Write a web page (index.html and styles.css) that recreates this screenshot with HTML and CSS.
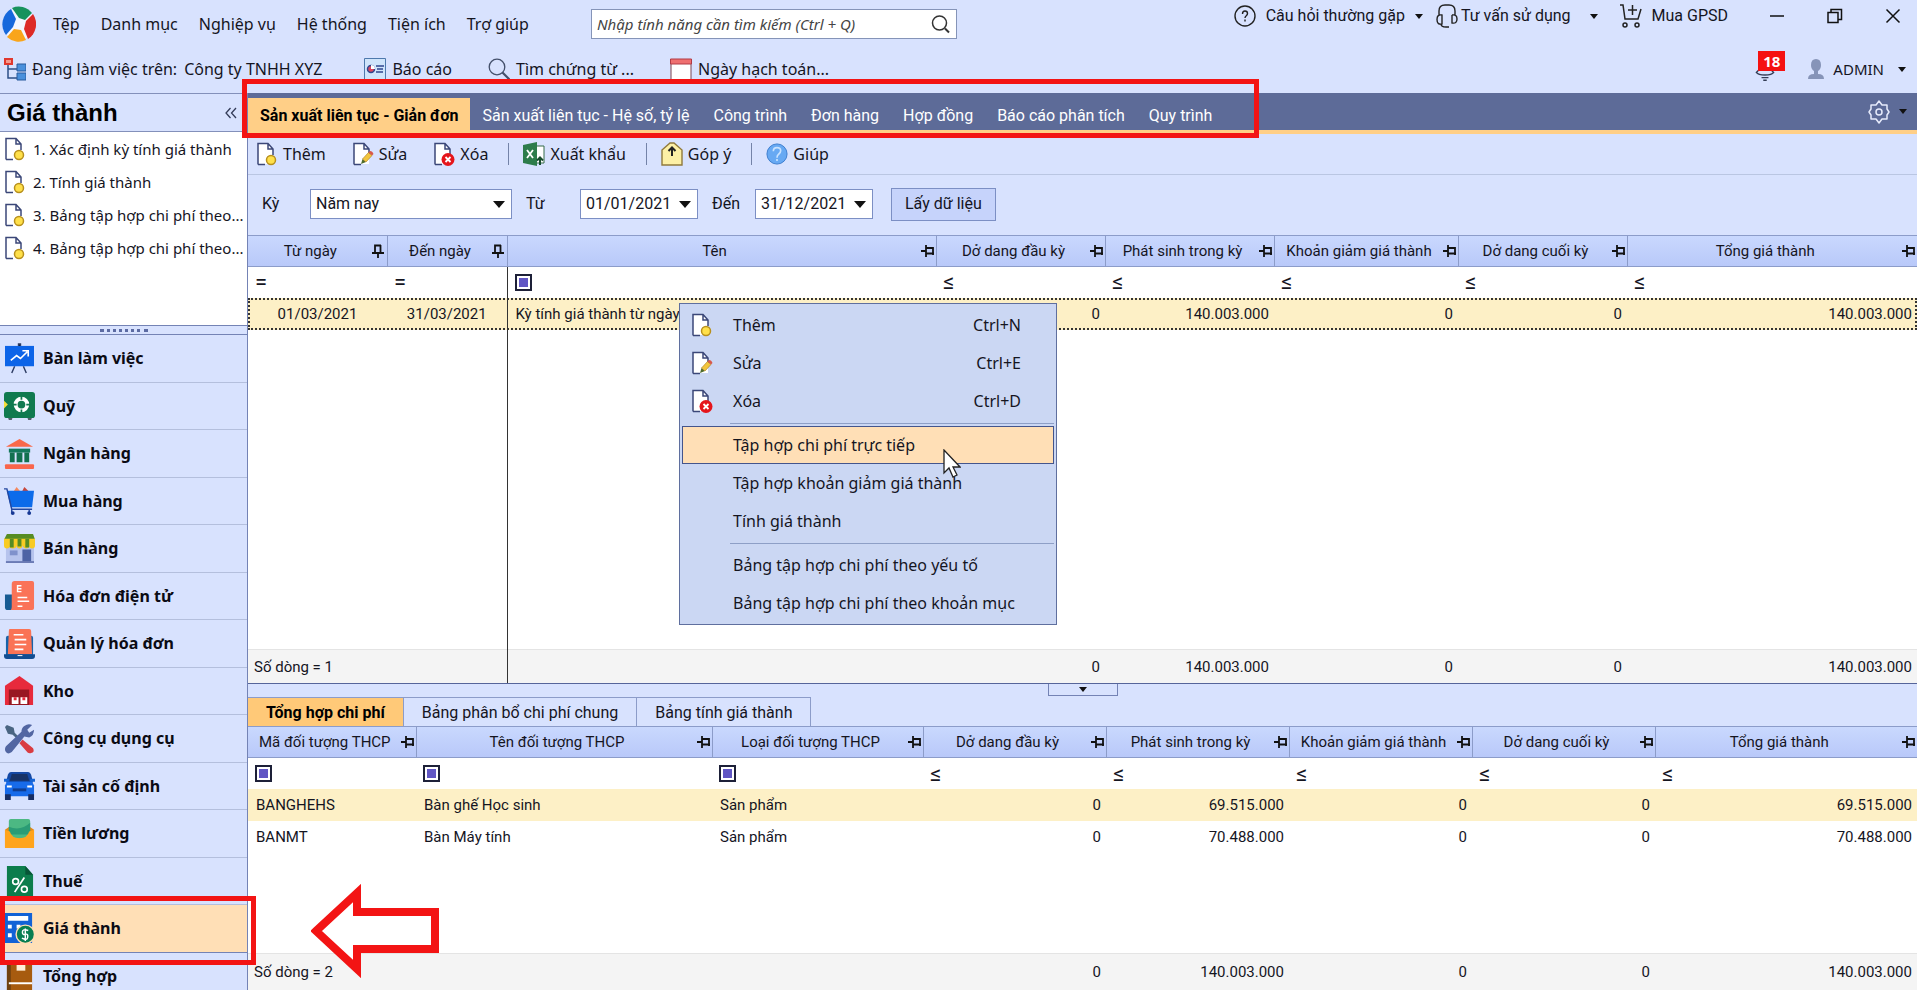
FILE: index.html
```html
<!DOCTYPE html>
<html lang="vi">
<head>
    <meta charset="UTF-8">
    <meta name="viewport" content="width=device-width, initial-scale=1.0">
    <title>Giá thành</title>
    <link rel="stylesheet" href="styles.css">
</head>
<body>
    <!-- Shared icons -->
    <svg class="sprite" aria-hidden="true">
        <symbol id="page" viewBox="0 0 22 24">
            <path d="M2 1.5h10l5 5.500v15H2z" fill="#fff"/>
            <path d="M2 22.500V1.500h10l5 5.500v6M2 22.500h7M12 1.500V7h5" fill="none" stroke="#3b4778" stroke-width="1.500"/>
        </symbol>
        <symbol id="page-new" viewBox="0 0 22 24">
            <use href="#page"/>
            <circle cx="15" cy="18" r="4.500" fill="#ffe04a" stroke="#b8901c" stroke-width="1.500"/>
        </symbol>
        <symbol id="page-edit" viewBox="0 0 22 24">
            <use href="#page"/>
            <path d="M9 22l1.500-5 3.500 3z" fill="#4d6b2e"/>
            <path d="M10.500 17l6-6.500 3.500 3-6 6.500z" fill="#f2c53d" stroke="#a67a1c" stroke-width=".6"/>
            <path d="M16.500 10.500l1.500-1.500q2.500 0 3.500 3l-1.500 1.500z" fill="#d8584a"/>
        </symbol>
        <symbol id="page-delete" viewBox="0 0 22 24">
            <use href="#page"/>
            <circle cx="15" cy="17.500" r="6.500" fill="#e5151b"/>
            <path d="M12.500 15l5 5M17.500 15l-5 5" stroke="#fff" stroke-width="1.800"/>
        </symbol>
        <symbol id="pin-side" viewBox="0 0 14 12">
            <path d="M0 6h5M5 0v12M5 3h7v6M5 8.500h8M12 2v8" fill="none" stroke="#111" stroke-width="1.800"/>
        </symbol>
        <symbol id="pin-down" viewBox="0 0 12 14">
            <path d="M6 14V9M0 9h12M3 9V1.500h6M8.500 9V1" fill="none" stroke="#111" stroke-width="1.800"/>
        </symbol>
    </svg>

    <div class="app">
        <!-- Title bar and main menu -->
        <header class="topbar">
            <div class="menu-row">
                <svg class="logo" viewBox="0 0 34 36">
                    <circle cx="17" cy="18" r="16" fill="#f3f6ff"/>
                    <path d="M10 2A17 17.500 0 0 1 30 7L23 14L17 12z" fill="#17925d"/>
                    <path d="M31 8A17 17.500 0 0 1 26 33L22 23L24 15z" fill="#dd2a26"/>
                    <path d="M24 34A17 17.500 0 0 1 5 31L12 23L19 24z" fill="#f9a51b"/>
                    <path d="M4 29A17 17.500 0 0 1 9 3L14 13L11 21z" fill="#1668dc"/>
                </svg>
                <nav class="menu">
                    <a href="#">Tệp</a>
                    <a href="#">Danh mục</a>
                    <a href="#">Nghiệp vụ</a>
                    <a href="#">Hệ thống</a>
                    <a href="#">Tiện ích</a>
                    <a href="#">Trợ giúp</a>
                </nav>
                <div class="search">
                    <input type="text" aria-label="Tìm kiếm" placeholder="Nhập tính năng cần tìm kiếm (Ctrl + Q)">
                    <svg viewBox="0 0 20 20"><circle cx="8.500" cy="9" r="7" fill="none" stroke="#333" stroke-width="1.500"/><path d="M14 14.500l4 4" stroke="#333" stroke-width="2"/></svg>
                </div>
                <div class="window-tools">
                    <button class="help-link">
                        <svg class="icon" viewBox="0 0 22 22"><circle cx="11" cy="11" r="10" fill="none" stroke="#222" stroke-width="1.400"/><path d="M8.500 9q0-3 2.500-3t2.500 2.500q0 1.200-1.200 2.200T11 13M11 14.500v2" fill="none" stroke="#222" stroke-width="1.400"/></svg>
                        <span>Câu hỏi thường gặp</span><i class="caret small"></i>
                    </button>
                    <button class="advice-link">
                        <svg class="icon tall" viewBox="0 0 22 24"><path d="M3 11V7q0-6 6-6h4q6 0 6 6v4M6 11v9q-5 1-5-4.500T6 11zM16 11v8q5 1 5-4t-5-4M5 20q0 3 5 3h3" fill="none" stroke="#222" stroke-width="1.400"/></svg>
                        <span>Tư vấn sử dụng</span><i class="caret small"></i>
                    </button>
                    <button class="buy-link">
                        <svg class="icon tall" viewBox="0 0 22 24"><path d="M0 1h3l2 14h13l3-10M8 6h9M12.500 1v10" fill="none" stroke="#222" stroke-width="1.500"/><circle cx="5" cy="21" r="2" fill="none" stroke="#222" stroke-width="1.500"/><circle cx="17" cy="21" r="2" fill="none" stroke="#222" stroke-width="1.500"/></svg>
                        <span>Mua GPSD</span>
                    </button>
                    <div class="window-buttons">
                        <button aria-label="Thu nhỏ"><svg viewBox="0 0 16 16"><path d="M1 8h14" stroke="#111" stroke-width="1.500"/></svg></button>
                        <button aria-label="Khôi phục"><svg viewBox="0 0 16 16"><path d="M1 4.500h10v10H1zM4 4.500v-3h10.500v10H11" fill="none" stroke="#111" stroke-width="1.500"/></svg></button>
                        <button aria-label="Đóng"><svg viewBox="0 0 16 16"><path d="M1.500 1.500l13 13M14.500 1.500l-13 13" stroke="#111" stroke-width="1.500"/></svg></button>
                    </div>
                </div>
            </div>

            <div class="context-row">
                <div class="company">
                    <svg class="icon tall" viewBox="0 0 22 24"><path d="M0 1h9v7H0z" fill="#e0382e"/><path d="M2 3h5v3H2z" fill="#f59a8d"/><path d="M4 8v13h9M4 12h9" fill="none" stroke="#2c4f86" stroke-width="1.500"/><path d="M13 7h9v7h-9zM13 16h9v7h-9z" fill="#4a90dc" stroke="#285b9c"/></svg>
                    <span>Đang làm việc trên:</span>
                    <span class="company-name">Công ty TNHH XYZ</span>
                </div>
                <a class="quick" href="#">
                    <svg class="icon" viewBox="0 0 22 22"><path d="M.5.500h21v21H.5z" fill="#cfe4fb" stroke="#4e79ad"/><circle cx="7" cy="11" r="3.500" fill="#d9475f" stroke="#31468f" stroke-width="1.500"/><path d="M7 11V7q4 0 4 4z" fill="#fff"/><path d="M12 8h8M13 11h6M12 14h7" stroke="#31468f" stroke-width="1.300"/></svg>
                    Báo cáo
                </a>
                <a class="quick" href="#">
                    <svg class="icon" viewBox="0 0 22 22"><circle cx="9" cy="9" r="7.800" fill="none" stroke="#44506b" stroke-width="1.300"/><path d="M14.500 14.500l7 7" stroke="#44506b" stroke-width="2.200"/></svg>
                    Tìm chứng từ ...
                </a>
                <a class="quick" href="#">
                    <svg class="icon" viewBox="0 0 22 22"><path d="M1 2h20v20H1z" fill="#fff" stroke="#7b4250"/><path d="M.5 1h21v5H.5z" fill="#ef6f70" stroke="#b23a44"/></svg>
                    Ngày hạch toán...
                </a>
                <div class="account">
                    <button class="bell" aria-label="Thông báo">
                        <svg viewBox="0 0 24 30"><path d="M2 19l4-4V8q0-6 6-6t6 6v7l4 4q-2 3-10 3T2 19zM8 25h8M10 28h4" fill="none" stroke="#333c55" stroke-width="1.600"/></svg>
                        <span class="badge">18</span>
                    </button>
                    <button class="user">
                        <svg class="icon" viewBox="0 0 18 22"><path d="M9 1q5 0 5 6 0 4-3 6v3q6 0 6 5H1q0-5 6-5v-3q-3-2-3-6 0-6 5-6z" fill="#8694b8"/></svg>
                        <span>ADMIN</span><i class="caret small"></i>
                    </button>
                </div>
            </div>
        </header>

        <!-- Sidebar -->
        <aside class="sidebar">
            <div class="sidebar-title">
                <h1>Giá thành</h1>
                <button class="collapse" aria-label="Thu gọn">
                    <svg viewBox="0 0 12 12"><path d="M5.500 1L1 6l4.500 5M11 1L6.500 6l4.500 5" fill="none" stroke="#333b58" stroke-width="1.300"/></svg>
                </button>
            </div>
            <ul class="steps">
                <li><a href="#"><svg><use href="#page-new"/></svg><span>1. Xác định kỳ tính giá thành</span></a></li>
                <li><a href="#"><svg><use href="#page-new"/></svg><span>2. Tính giá thành</span></a></li>
                <li><a href="#"><svg><use href="#page-new"/></svg><span>3. Bảng tập hợp chi phí theo...</span></a></li>
                <li><a href="#"><svg><use href="#page-new"/></svg><span>4. Bảng tập hợp chi phí theo...</span></a></li>
            </ul>
            <div class="grip"><i></i></div>
            <nav class="modules">
                <ul>
                    <li><a href="#">
                        <svg viewBox="0 0 32 32"><path d="M15 1h2v3h-2zM11 24l-3 7M20 24l3 7" stroke="#2d3c63" stroke-width="1.500"/><path d="M1 3h30v21H1z" fill="#0c64e8"/><path d="M7 18l6-5 4 3 7-7M19 8h6v6" fill="none" stroke="#fff" stroke-width="1.700"/></svg>
                        Bàn làm việc</a></li>
                    <li><a href="#">
                        <svg viewBox="0 0 32 32"><path d="M4 28h5l-1 3H5zM24 28h5l-1 3h-3z" fill="#52606a"/><rect y="2" width="32" height="27" rx="3" fill="#107a4f"/><path d="M0 11l4 4-4 4z" fill="#f5df3a"/><circle cx="18" cy="15" r="6" fill="none" stroke="#fff" stroke-width="4"/><path d="M18 6v4M18 20v4M9 15h4M23 15h4" stroke="#107a4f" stroke-width="1.800"/></svg>
                        Quỹ</a></li>
                    <li><a href="#">
                        <svg viewBox="0 0 32 32"><path d="M16 1l14 8H2z" fill="#f9694a"/><path d="M5 11h22v4H5z" fill="#14795c"/><path d="M6 15h5v10H6zM13 15h6v10h-6zM21 15h5v10h-5z" fill="#12704f"/><rect x="1" y="27" width="30" height="5" rx="1" fill="#f9654c"/></svg>
                        Ngân hàng</a></li>
                    <li><a href="#">
                        <svg viewBox="0 0 32 32"><path d="M9 8l4-6 5 6z" fill="#f5885d"/><path d="M18 8l3-6 6 6z" fill="#c7473c"/><path d="M3 6h28l-2 17H7z" fill="#0c6bea"/><path d="M0 4h3l5 21h21M8 25v3M26 25v3" fill="none" stroke="#2448a0" stroke-width="1.500"/><circle cx="9" cy="29" r="2" fill="#173894"/><circle cx="26" cy="29" r="2" fill="#173894"/></svg>
                        Mua hàng</a></li>
                    <li><a href="#">
                        <svg viewBox="0 0 32 32"><path d="M2 13h29v18H2z" fill="#b6c3ed"/><path d="M19 17h9v14h-9z" fill="#4d63a5"/><path d="M6 18h8v5H6z" fill="#7f91cc"/><path d="M2 29h29v2H2z" fill="#6b7bb5"/><path d="M3 1h27l2 6H0z" fill="#568c24"/><path d="M0 6h32v7q0 3-3 3t-3-3q0 3-3 3t-4-3q0 3-3 3t-3-3q0 3-4 3t-3-3q0 3-3 3t-3-3z" fill="#f8cb24"/><path d="M6 6h4v9H6zM14 6h4v8h-4zM22 6h4v9h-4z" fill="#568c24"/></svg>
                        Bán hàng</a></li>
                    <li><a href="#">
                        <svg viewBox="0 0 32 32"><path d="M1 15h8v16H4q-3 0-3-3z" fill="#175b93"/><path d="M11 1h18q2 0 2 2v26q0 2-2 2H6q2 0 2-4V4q0-3 3-3z" fill="#fa7358"/><path d="M18 6h-4v6h4M14 9h4M14 18h10M14 22h12M14 27h5" fill="none" stroke="#fff" stroke-width="1.500"/></svg>
                        Hóa đơn điện tử</a></li>
                    <li><a href="#">
                        <svg viewBox="0 0 32 32"><path d="M2 10q0-2 2-2h24q2 0 2 2v18H2z" fill="#1763aa"/><path d="M6 1h20q2 0 2 2l1 24H4L5 3q0-2 1-2z" fill="#fa7355"/><path d="M10 7h10M11 12h12M11 17h12M11 22h9" stroke="#fff" stroke-width="1.700"/><path d="M0 27h32v2q0 3-3 3H3q-3 0-3-3z" fill="#124c91"/><path d="M14 28h5v1h-5z" fill="#fff"/></svg>
                        Quản lý hóa đơn</a></li>
                    <li><a href="#">
                        <svg viewBox="0 0 32 32"><path d="M16 1l14 10v20H1V11z" fill="#e72a3c"/><path d="M5 15h21v16H5z" fill="#981722"/><path d="M8 23h7v7H8zM17 23h7v7h-7z" fill="#fff"/><path d="M10 23h3v3h-3zM19 23h3v3h-3z" fill="#e72a3c"/></svg>
                        Kho</a></li>
                    <li><a href="#">
                        <svg viewBox="0 0 32 32"><path d="M3 2l7 3 1 5 5 5-2 2-5-5-5-1-3-7z" fill="#4a6582"/><path d="M19 17l11 9q2 4-2 5-3 1-5-2l-7-8z" fill="#d93c42"/><path d="M21 3q4-3 8-1l-5 5 2 3 5-3q0 6-5 8l-5-1L8 30q-4 3-6 0t0-6l16-15q0-4 3-6z" fill="#5266a2"/></svg>
                        Công cụ dụng cụ</a></li>
                    <li><a href="#">
                        <svg viewBox="0 0 32 32"><path d="M7 2h18q2 0 3 3l2 8H2l2-8q1-3 3-3z" fill="#1448a4"/><path d="M8 4h16l2 7H6z" fill="#173266"/><path d="M0 9h5v3H0zM27 9h5v3h-5z" fill="#1765d4"/><path d="M3 12h26l2 4v11H1V16z" fill="#176bea"/><path d="M1 25h6v6H1zM25 25h6v6h-6z" fill="#172e65"/><path d="M9 19h14v3H9z" fill="#103e91"/><path d="M3 16h5v2H3zM24 16h5v2h-5z" fill="#fff"/></svg>
                        Tài sản cố định</a></li>
                    <li><a href="#">
                        <svg viewBox="0 0 32 32"><path d="M1 12l6-4h18l6 4v18H1z" fill="#e58918"/><rect x="5" y="1" width="22" height="20" rx="2" fill="#4cb883"/><path d="M5 9q12 5 22-4v12H5z" fill="#2b9c75"/><path d="M1 12l5 2q2 7 10 7t10-7l5-2v19H1z" fill="#ffa41d"/></svg>
                        Tiền lương</a></li>
                    <li><a href="#">
                        <svg viewBox="0 0 32 32"><path d="M3 1h19l8 9v22H3z" fill="#0c7d4c"/><path d="M22 1l8 9h-8z" fill="#075637"/><path d="M21 13l-10 15" stroke="#fff" stroke-width="1.800"/><circle cx="12" cy="17" r="3" fill="none" stroke="#fff" stroke-width="1.700"/><circle cx="21" cy="25" r="3" fill="none" stroke="#fff" stroke-width="1.700"/></svg>
                        Thuế</a></li>
                    <li><a href="#" class="active">
                        <svg viewBox="0 0 32 32"><path d="M1 0h28v31H1z" fill="#1262d6"/><path d="M4 3h21v5H4zM4 12h4v4H4zM4 21h4v4H4zM13 12h4v4h-4z" fill="#fff"/><circle cx="22" cy="22" r="9.500" fill="#087e51" stroke="#ffdfb4" stroke-width="1.500"/><path d="M25 18q-6-2-6 1.500T22 22t2.500 3-6 1M22 16v13" fill="none" stroke="#fff" stroke-width="1.500"/></svg>
                        Giá thành</a></li>
                    <li><a href="#">
                        <svg viewBox="0 0 32 32"><path d="M3 0h26v32H3z" fill="#a75b0f"/><path d="M3 0h4v32H3z" fill="#70400f"/><path d="M13 5h9v6h-9z" fill="#fff0d8"/><path d="M5 23h24v2H5z" fill="#fff"/></svg>
                        Tổng hợp</a></li>
                </ul>
            </nav>
        </aside>

        <!-- Workspace -->
        <main class="workspace">
            <div class="tabs">
                <a class="active" href="#">Sản xuất liên tục - Giản đơn</a>
                <a href="#">Sản xuất liên tục - Hệ số, tỷ lệ</a>
                <a href="#">Công trình</a>
                <a href="#">Đơn hàng</a>
                <a href="#">Hợp đồng</a>
                <a href="#">Báo cáo phân tích</a>
                <a href="#">Quy trình</a>
                <button class="settings" aria-label="Tùy chỉnh">
                    <svg viewBox="0 0 24 24"><path d="M12 1l3 4 5 0 0 4 2 3-2 3v4h-5l-3 4-3-4H4v-4l-2-3 2-3V5h5z" fill="none" stroke="#e6ebfb" stroke-width="1.500" stroke-linejoin="round"/><circle cx="12" cy="12" r="3" fill="none" stroke="#e6ebfb" stroke-width="1.500"/></svg>
                    <i class="caret small"></i>
                </button>
            </div>

            <div class="toolbar">
                <button><svg><use href="#page-new"/></svg>Thêm</button>
                <button><svg><use href="#page-edit"/></svg>Sửa</button>
                <button><svg><use href="#page-delete"/></svg>Xóa</button>
                <i class="divider"></i>
                <button><svg viewBox="0 0 22 24"><path d="M11 4h10v17H11z" fill="#fff" stroke="#356b48"/><path d="M0 3l14-3v24L0 21z" fill="#2d7c4b"/><path d="M4 8l6 8M10 8l-6 8" stroke="#fff" stroke-width="1.800"/><path d="M17 23v-7M14 18.500l3-3 3 3" fill="none" stroke="#174c2c" stroke-width="2"/></svg>Xuất khẩu</button>
                <i class="divider"></i>
                <button><svg viewBox="0 0 22 24"><path d="M1 8l8-7h4l8 7v15H1z" fill="#fdf0a6" stroke="#907a3c" stroke-width="1.400"/><path d="M11 14V6M7.500 9L11 5.500 14.500 9" fill="none" stroke="#222" stroke-width="2"/></svg>Góp ý</button>
                <i class="divider"></i>
                <button><svg viewBox="0 0 24 24"><circle cx="12" cy="12" r="11" fill="#67a9f3" stroke="#3879cc"/><path d="M8 9q0-4 4-4t4 3.500q0 2-2 3.500t-2 4M12 17.500v2" fill="none" stroke="#c8e2ff" stroke-width="1.800"/></svg>Giúp</button>
            </div>

            <form class="filters">
                <label for="period">Kỳ</label>
                <span class="select period"><select id="period"><option>Năm nay</option></select></span>
                <label for="from">Từ</label>
                <span class="select date"><select id="from"><option>01/01/2021</option></select></span>
                <label for="to">Đến</label>
                <span class="select date"><select id="to"><option>31/12/2021</option></select></span>
                <button type="button">Lấy dữ liệu</button>
            </form>

            <div class="pane pane-top">
                <table class="grid periods">
                    <colgroup>
                        <col class="w-from"><col class="w-to"><col><col class="w-money"><col class="w-money"><col class="w-money-wide"><col class="w-money"><col class="w-total">
                    </colgroup>
                    <thead>
                        <tr>
                            <th><div><span>Từ ngày</span><svg class="down"><use href="#pin-down"/></svg></div></th>
                            <th><div><span>Đến ngày</span><svg class="down"><use href="#pin-down"/></svg></div></th>
                            <th><div><span>Tên</span><svg><use href="#pin-side"/></svg></div></th>
                            <th><div><span>Dở dang đầu kỳ</span><svg><use href="#pin-side"/></svg></div></th>
                            <th><div><span>Phát sinh trong kỳ</span><svg><use href="#pin-side"/></svg></div></th>
                            <th><div><span>Khoản giảm giá thành</span><svg><use href="#pin-side"/></svg></div></th>
                            <th><div><span>Dở dang cuối kỳ</span><svg><use href="#pin-side"/></svg></div></th>
                            <th><div><span>Tổng giá thành</span><svg><use href="#pin-side"/></svg></div></th>
                        </tr>
                    </thead>
                    <tbody>
                        <tr class="conditions">
                            <td>=</td><td>=</td><td><i class="contains"></i></td>
                            <td>≤</td><td>≤</td><td>≤</td><td>≤</td><td>≤</td>
                        </tr>
                        <tr class="focused">
                            <td class="center">01/03/2021</td><td class="center">31/03/2021</td><td>Kỳ tính giá thành từ ngày</td>
                            <td class="num">0</td><td class="num">140.003.000</td><td class="num">0</td><td class="num">0</td><td class="num">140.003.000</td>
                        </tr>
                        <tr class="filler"><td></td><td></td><td></td><td></td><td></td><td></td><td></td><td></td></tr>
                    </tbody>
                    <tfoot>
                        <tr>
                            <td colspan="2">Số dòng = 1</td><td></td>
                            <td class="num">0</td><td class="num">140.003.000</td><td class="num">0</td><td class="num">0</td><td class="num">140.003.000</td>
                        </tr>
                    </tfoot>
                </table>
            </div>

            <div class="splitter"><button aria-label="Ẩn chi tiết"><i class="caret small"></i></button></div>

            <div class="detail-tabs">
                <a class="active" href="#">Tổng hợp chi phí</a>
                <a href="#">Bảng phân bổ chi phí chung</a>
                <a href="#">Bảng tính giá thành</a>
            </div>

            <div class="pane pane-bottom">
                <table class="grid details">
                    <colgroup>
                        <col class="w-code"><col><col class="w-type"><col class="w-sum"><col class="w-sum"><col class="w-sum"><col class="w-sum"><col class="w-last">
                    </colgroup>
                    <thead>
                        <tr>
                            <th><div><span>Mã đối tượng THCP</span><svg><use href="#pin-side"/></svg></div></th>
                            <th><div><span>Tên đối tượng THCP</span><svg><use href="#pin-side"/></svg></div></th>
                            <th><div><span>Loại đối tượng THCP</span><svg><use href="#pin-side"/></svg></div></th>
                            <th><div><span>Dở dang đầu kỳ</span><svg><use href="#pin-side"/></svg></div></th>
                            <th><div><span>Phát sinh trong kỳ</span><svg><use href="#pin-side"/></svg></div></th>
                            <th><div><span>Khoản giảm giá thành</span><svg><use href="#pin-side"/></svg></div></th>
                            <th><div><span>Dở dang cuối kỳ</span><svg><use href="#pin-side"/></svg></div></th>
                            <th><div><span>Tổng giá thành</span><svg><use href="#pin-side"/></svg></div></th>
                        </tr>
                    </thead>
                    <tbody>
                        <tr class="conditions">
                            <td><i class="contains"></i></td><td><i class="contains"></i></td><td><i class="contains"></i></td>
                            <td>≤</td><td>≤</td><td>≤</td><td>≤</td><td>≤</td>
                        </tr>
                        <tr class="selected">
                            <td>BANGHEHS</td><td>Bàn ghế Học sinh</td><td>Sản phẩm</td>
                            <td class="num">0</td><td class="num">69.515.000</td><td class="num">0</td><td class="num">0</td><td class="num">69.515.000</td>
                        </tr>
                        <tr>
                            <td>BANMT</td><td>Bàn Máy tính</td><td>Sản phẩm</td>
                            <td class="num">0</td><td class="num">70.488.000</td><td class="num">0</td><td class="num">0</td><td class="num">70.488.000</td>
                        </tr>
                        <tr class="filler"><td colspan="8"></td></tr>
                    </tbody>
                    <tfoot>
                        <tr>
                            <td>Số dòng = 2</td><td></td><td></td>
                            <td class="num">0</td><td class="num">140.003.000</td><td class="num">0</td><td class="num">0</td><td class="num">140.003.000</td>
                        </tr>
                    </tfoot>
                </table>
            </div>
        </main>

        <!-- Context menu -->
        <div class="context-menu">
            <button><svg><use href="#page-new"/></svg><span>Thêm</span><kbd>Ctrl+N</kbd></button>
            <button><svg><use href="#page-edit"/></svg><span>Sửa</span><kbd>Ctrl+E</kbd></button>
            <button><svg><use href="#page-delete"/></svg><span>Xóa</span><kbd>Ctrl+D</kbd></button>
            <hr>
            <button class="hover"><span>Tập hợp chi phí trực tiếp</span></button>
            <button><span>Tập hợp khoản giảm giá thành</span></button>
            <button><span>Tính giá thành</span></button>
            <hr>
            <button><span>Bảng tập hợp chi phí theo yếu tố</span></button>
            <button><span>Bảng tập hợp chi phí theo khoản mục</span></button>
        </div>
        <svg class="cursor" viewBox="0 0 18 29"><path d="M1 1v23l5-5 4 9 4-2-4-8h7z" fill="#fff" stroke="#222" stroke-width="1.300"/></svg>

        <!-- Highlights -->
        <div class="mark mark-tabs"></div>
        <div class="mark mark-module"></div>
        <svg class="arrow" viewBox="0 0 128 94"><path d="M5 47L46 9v19h78v37H46v20z" fill="#fff" stroke="#f31414" stroke-width="8"/></svg>
    </div>
</body>
</html>
```

FILE: styles.css
```css
* {
    box-sizing: border-box;
}

body {
    margin: 0;
    height: 100vh;
    overflow: hidden;
    padding-bottom: 4px;
    background: #fff;
    color: #15151f;
    font-family: "Noto Sans", "Open Sans", sans-serif;
    font-size: 15px;
    line-height: 20px;
}

a {
    color: inherit;
    text-decoration: none;
}

ul {
    list-style: none;
    margin: 0;
    padding: 0;
}

button,
input,
select {
    font: inherit;
    color: inherit;
}

button {
    padding: 0;
    border: none;
    background: none;
    white-space: nowrap;
}

svg {
    display: block;
    flex: none;
}

.sprite {
    position: absolute;
    width: 0;
    height: 0;
}

.icon {
    width: 22px;
    height: 22px;
}

.icon.tall {
    height: 24px;
}

.caret {
    flex: none;
    border: 6px solid transparent;
    border-top: 7px solid #111;
    border-bottom: none;
}

.caret.small {
    border-width: 5px 4px 0;
}

.app {
    position: relative;
    height: 100%;
    display: grid;
    grid-template: auto minmax(0, 1fr) / 248px minmax(0, 1fr);
}

/* Title bar */
.topbar {
    grid-column: 1 / -1;
    background: #d8e2fe;
}

.menu-row,
.context-row {
    display: flex;
    align-items: center;
}

.menu-row {
    height: 47px;
    padding-left: 2px;
}

.context-row {
    height: 46px;
    padding: 0 11px 2px 4px;
    font-size: 16px;
}

.logo {
    width: 34px;
    height: 36px;
}

.menu {
    display: flex;
    gap: 21px;
    margin-left: 17px;
    width: 538px;
    font-size: 16px;
    white-space: nowrap;
}

.search {
    display: flex;
    align-items: center;
    width: 366px;
    height: 30px;
    padding: 0 5px;
    border: 1px solid #8594b8;
    background: #fff;
}

.search input {
    flex: 1;
    min-width: 0;
    padding: 0;
    border: none;
    outline: none;
    font-style: italic;
}

.search input::placeholder {
    color: #444;
}

.search svg {
    width: 20px;
    height: 20px;
}

.window-tools {
    display: flex;
    align-self: flex-start;
    align-items: center;
    height: 32px;
    margin-left: auto;
    font-family: Roboto, sans-serif;
    font-size: 16px;
}

.window-tools > button {
    display: flex;
    align-items: center;
    gap: 10px;
}

.window-tools .advice-link {
    gap: 3px;
    margin-left: 13px;
}

.advice-link .caret {
    margin-left: 16px;
}

.buy-link {
    margin-left: 22px;
}

.window-buttons {
    display: flex;
    gap: 42px;
    margin: 0 16px 0 41px;
}

.window-buttons svg {
    width: 16px;
    height: 16px;
}

.company,
.quick,
.user {
    display: flex;
    align-items: center;
    gap: 6px;
}

.company {
    margin-right: 6px;
}

.company-name {
    margin-left: 1px;
}

.quick {
    margin-left: 36px;
}

.account {
    display: flex;
    align-items: center;
    gap: 28px;
    margin-left: auto;
    font-size: 15px;
}

.bell {
    position: relative;
}

.bell svg {
    width: 24px;
    height: 26px;
}

.badge {
    position: absolute;
    left: 5px;
    top: -5px;
    width: 27px;
    height: 20px;
    background: #f51111;
    color: #fff;
    font-weight: bold;
}

.user .caret {
    margin-left: 8px;
}

/* Sidebar */
.sidebar {
    display: flex;
    flex-direction: column;
    border-top: 1px solid #8390ba;
    border-right: 1px solid #7483b5;
    background: #d8e2fe;
    min-height: 0;
}

.sidebar-title {
    display: flex;
    align-items: center;
    justify-content: space-between;
    height: 38px;
    padding: 0 10px 0 7px;
    border-bottom: 1px solid #8390ba;
}

.sidebar-title h1 {
    margin: 0;
    font-family: "Liberation Sans", Arial, sans-serif;
    font-size: 24px;
    color: #000;
}

.collapse svg {
    width: 12px;
    height: 12px;
}

.steps {
    height: 193px;
    background: #fff;
}

.steps a {
    display: flex;
    align-items: center;
    gap: 7px;
    height: 33px;
    padding-left: 4px;
    white-space: nowrap;
}

.steps svg,
.toolbar svg,
.context-menu svg {
    width: 22px;
    height: 24px;
}

.grip {
    display: flex;
    align-items: center;
    justify-content: center;
    height: 10px;
    border: solid #7483b5;
    border-width: 1px 0;
}

.grip i {
    width: 48px;
    border-top: 3px dotted #5c6ba3;
}

.modules {
    flex: 1;
    min-height: 0;
    overflow: hidden;
}

/* the last module runs past the bottom edge */
.modules ul {
    display: grid;
    grid-auto-rows: 1fr;
    height: calc(100% + 10px);
}

.modules a {
    display: flex;
    align-items: center;
    gap: 8px;
    height: 100%;
    padding-left: 4px;
    border-bottom: 1px solid #b4bfdd;
    color: #0b0b14;
    font-size: 16px;
    font-weight: bold;
}

.modules a.active {
    border-color: #7483b5;
    background: #ffdfb6;
}

.modules svg {
    width: 31px;
    height: 31px;
}

/* Workspace */
.workspace {
    display: flex;
    flex-direction: column;
    min-height: 0;
    background: #d8e2fe;
}

.tabs {
    display: flex;
    align-items: flex-end;
    height: 41px;
    border-bottom: 4px solid #ffcf87;
    background: #5d6b98;
    color: #fff;
    font-family: Roboto, sans-serif;
    font-size: 16px;
    white-space: nowrap;
}

.tabs a {
    height: 32px;
    padding: 0 12px;
    line-height: 36px;
}

.tabs a.active {
    background: #ffcf87;
    color: #000;
    font-weight: bold;
}

.settings {
    display: flex;
    align-items: center;
    align-self: center;
    gap: 8px;
    margin: 0 10px 0 auto;
}

.settings svg {
    width: 24px;
    height: 24px;
}

.toolbar {
    display: flex;
    align-items: center;
    gap: 26px;
    height: 41px;
    padding-left: 8px;
    border-bottom: 1px solid #bac6e2;
    font-size: 16px;
}

.toolbar button {
    display: flex;
    align-items: center;
    gap: 5px;
}

.divider {
    height: 22px;
    margin: 0 -12px 0 -6px;
    border-left: 1px solid #7483a8;
}

.filters {
    display: flex;
    align-items: center;
    height: 60px;
    padding: 0 0 2px 14px;
    font-family: Roboto, sans-serif;
    font-size: 16px;
}

.filters label {
    width: 48px;
}

.select {
    position: relative;
    height: 30px;
    margin-right: 14px;
}

.period {
    width: 202px;
}

.date {
    width: 118px;
}

.filters label[for="from"] {
    width: 54px;
}

.filters label[for="to"] {
    width: 43px;
}

.select select {
    width: 100%;
    height: 100%;
    padding: 0 5px;
    border: 1px solid #7c8fc4;
    border-radius: 0;
    background: #fff;
    appearance: none;
}

.select::after {
    content: "";
    position: absolute;
    right: 7px;
    top: 12px;
    border: 6px solid transparent;
    border-top: 7px solid #111;
    border-bottom: none;
    pointer-events: none;
}

.filters button {
    height: 33px;
    margin-left: 4px;
    padding: 0 13px;
    border: 1px solid #7c8fc4;
    background: #c6d3fb;
}

/* Grids */
.pane {
    min-height: 0;
    background: #fff;
}

.pane-top {
    flex: 449 1 0;
    border-bottom: 1px solid #56659a;
}

.pane-bottom {
    flex: 264 1 0;
}

.grid {
    width: 100%;
    height: 100%;
    border-collapse: collapse;
    table-layout: fixed;
    font-family: Roboto, sans-serif;
}

.w-from { width: 139px; }
.w-to { width: 120px; }
.w-money { width: 169px; }
.w-money-wide { width: 184px; }
.w-total { width: 290px; }
.w-code { width: 168px; }
.w-type { width: 211px; }
.w-sum { width: 183px; }
.w-last { width: 262px; }

.grid td,
.grid th {
    padding: 0 5px 0 8px;
    text-align: left;
    white-space: nowrap;
}

.grid thead tr {
    height: 31px;
    background: linear-gradient(#c9d8fe, #b8c8f9);
}

.grid th {
    padding: 0 1px;
    border: solid #8c9cc9;
    border-width: 1px 1px 1px 0;
    font-weight: normal;
}

.grid th:last-child {
    border-right: none;
}

.grid th div {
    display: flex;
    align-items: center;
}

.grid th span {
    flex: 1;
    text-align: center;
}

.grid th svg {
    width: 14px;
    height: 12px;
}

.grid th svg.down {
    width: 12px;
    height: 14px;
    margin-right: 2px;
}

.grid .conditions {
    height: 31px;
}

.grid .conditions td {
    padding-left: 7px;
    font-size: 22px;
}

.grid tbody tr {
    height: 32px;
}

.grid tbody .filler {
    height: auto;
}

.grid .selected,
.grid .focused {
    background: #fdf0c6;
}

.grid .focused {
    outline: 2px dotted #333;
    outline-offset: -2px;
}

.grid tfoot tr {
    height: 37px;
    background: #f4f4f4;
}

.periods tfoot tr {
    height: 34px;
}

.grid tfoot td {
    padding-left: 6px;
    border-top: 1px solid #e4e4e4;
}

/* frozen columns end here */
.periods tbody td:nth-child(2),
.periods tfoot td:first-child {
    border-right: 1px solid #333;
}

.grid td.center {
    padding: 0;
    text-align: center;
}

.grid td.num {
    text-align: right;
}

.contains {
    display: block;
    width: 17px;
    height: 17px;
    border: 2px solid #1d2038;
    background: #6156c4;
    box-shadow: inset 0 0 0 2px #fff;
}

.splitter {
    display: flex;
    justify-content: center;
    height: 13px;
}

.splitter button {
    display: flex;
    align-items: center;
    justify-content: center;
    width: 70px;
    height: 12px;
    border: 1px solid #7483b5;
    border-top: none;
}

.detail-tabs {
    display: flex;
    height: 29px;
    font-family: Roboto, sans-serif;
    font-size: 16px;
}

.detail-tabs a {
    padding: 0 18px;
    border: solid #8c9cc9;
    border-width: 1px 1px 0 0;
    line-height: 30px;
}

.detail-tabs a.active {
    background: #ffc978;
    color: #000;
    font-weight: bold;
}

/* Context menu */
.context-menu {
    position: absolute;
    left: 679px;
    top: 303px;
    width: 378px;
    padding: 2px;
    border: 1px solid #5f6f9e;
    background: #cbd7f3;
}

.context-menu button {
    display: flex;
    align-items: center;
    width: 100%;
    height: 38px;
    padding: 0 32px 0 50px;
    border: 1px solid transparent;
    font-size: 16px;
}

.context-menu svg {
    margin: 0 20px 0 -42px;
}

.context-menu span {
    flex: 1;
    text-align: left;
}

.context-menu kbd {
    font: inherit;
}

.context-menu .hover {
    border-color: #44558c;
    background: #ffdfb6;
}

.context-menu hr {
    margin: 3px 0 2px 48px;
    border: none;
    border-top: 1px solid #8e9fc6;
}

.cursor {
    position: absolute;
    left: 943px;
    top: 449px;
    width: 18px;
    height: 29px;
}

/* Highlights */
.mark {
    position: absolute;
    border: 5px solid #f31414;
    pointer-events: none;
}

.mark-tabs {
    left: 242px;
    top: 79px;
    width: 1017px;
    height: 59px;
}

.mark-module {
    left: 0;
    bottom: 25px;
    width: 256px;
    height: 69px;
}

.arrow {
    position: absolute;
    left: 311px;
    bottom: 12px;
    width: 128px;
    height: 94px;
}
```
